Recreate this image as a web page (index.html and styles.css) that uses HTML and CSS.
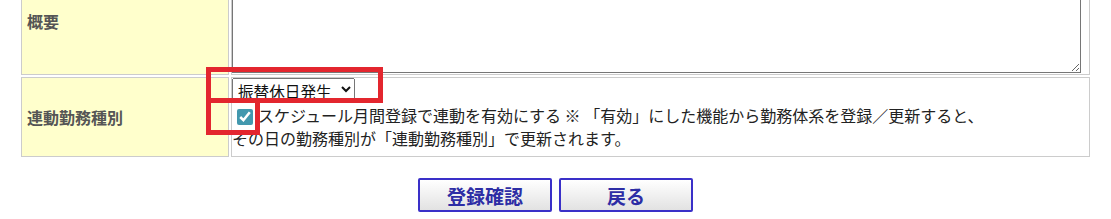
FILE: index.html
```
<html>

<head>
    <title>勤務種別設定</title>
    <link rel="stylesheet" href="styles.css">
</head>

<body>
    <div class="page">
        <table class="form-table">
            <tr>
                <th class="label">概要</th>
                <td class="value summary-cell"><textarea class="summary" name="summary"></textarea></td>
            </tr>
            <tr>
                <th class="label">連動勤務種別</th>
                <td class="value link-cell">
                    <select class="link-type" name="link-type">
                        <option>振替休日発生</option>
                    </select>
                    <label class="link-check"><input type="checkbox" name="link-enabled" checked>スケジュール月間登録で連動を有効にする ※ 「有効」にした機能から勤務体系を登録／更新すると、</label><br>その日の勤務種別が「連動勤務種別」で更新されます。
                </td>
            </tr>
        </table>
        <div class="actions">
            <button type="button">登録確認</button>
            <button type="button">戻る</button>
        </div>
        <span class="mark mark-select"></span>
        <span class="mark mark-check"></span>
    </div>
</body>

</html>
```

FILE: styles.css
```
body {
    margin: 0;
    background: #fff;
    font-family: "Noto Sans CJK JP", sans-serif;
    font-size: 15.6px;
    color: #222;
}

.page {
    position: relative;
    display: flow-root;
    padding: 0 19px;
}

.form-table {
    width: 1073px;
    margin-top: -36px;
    border-spacing: 2px;
}

.label {
    width: 200px;
    padding: 0 1px 0 5px;
    border: 1px solid #ccc;
    background: #ffffcc;
    color: #555;
    font-weight: bold;
    text-align: left;
    vertical-align: middle;
}

.value {
    border: 1px solid #ccc;
    background: #fff;
    vertical-align: top;
}

.summary-cell {
    padding: 1px 0;
}

.summary {
    display: block;
    width: 849px;
    height: 105px;
    margin: 0;
    border: 1px solid #767676;
    font-family: inherit;
}

.link-cell {
    padding: 0 0 6px 0;
    line-height: 23px;
}

.link-type {
    display: block;
    width: 123px;
    height: 23px;
    margin: 0 0 3px 0;
    padding: 0 2px 0 1px;
    font-family: inherit;
    font-size: 15.6px;
    color: #111;
}

.link-check input {
    width: 16px;
    height: 16px;
    margin: 5px 5px 0 5px;
    vertical-align: -3px;
    accent-color: #4298ae;
}

.actions {
    display: flex;
    justify-content: center;
    gap: 7px;
    margin-top: 19px;
}

button {
    width: 134px;
    height: 34px;
    padding: 0;
    border: 2px solid #3a30c8;
    border-radius: 2px;
    background: linear-gradient(#ffffff, #e2e2e2);
    color: #2d2da5;
    font-family: inherit;
    font-size: 19px;
    font-weight: bold;
}

.mark {
    position: absolute;
    border: 5px solid #e3262e;
    box-sizing: border-box;
}

.mark-select {
    left: 206px;
    top: 67px;
    width: 177px;
    height: 36px;
}

.mark-check {
    left: 206px;
    top: 98px;
    width: 54px;
    height: 37px;
}
```
